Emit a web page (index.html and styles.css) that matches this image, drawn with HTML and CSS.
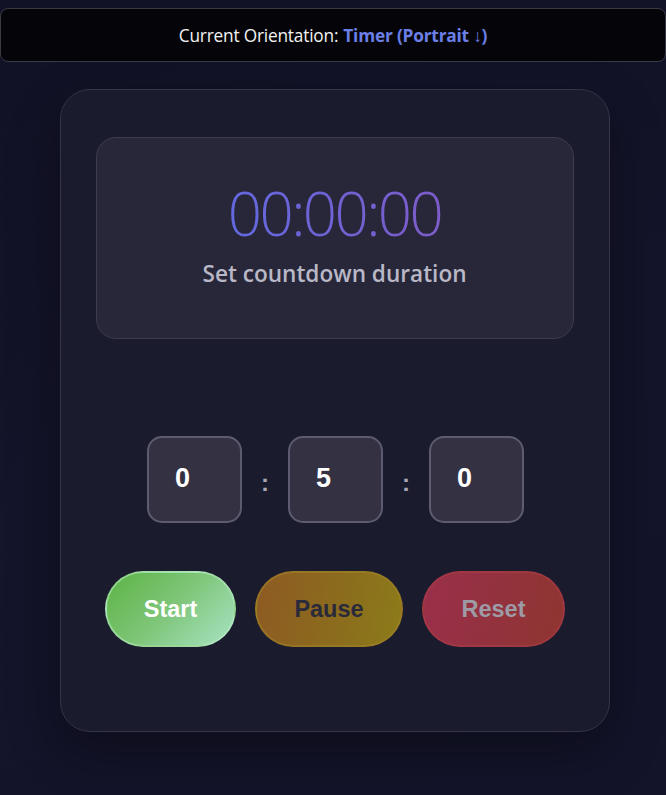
FILE: index.html
```html
<!DOCTYPE html>
<html>
<head>
<meta charset="utf-8">
<link rel="stylesheet" href="styles.css">
</head>
<body>
<div class="orientation">Current Orientation: <strong>Timer (Portrait ↓)</strong></div>
<main class="card">
  <section class="display">
    <div class="time">00:00:00</div>
    <div class="label">Set countdown duration</div>
  </section>
  <div class="inputs">
    <div class="field">0</div>
    <span class="sep">:</span>
    <div class="field">5</div>
    <span class="sep">:</span>
    <div class="field">0</div>
  </div>
  <div class="buttons">
    <button class="btn start">Start</button>
    <button class="btn pause">Pause</button>
    <button class="btn reset">Reset</button>
  </div>
</main>
</body>
</html>
```
FILE: styles.css
```css
html, body {
  margin: 0;
  padding: 0;
}
body {
  min-height: 795px;
  background: linear-gradient(160deg, #111225 0%, #14142a 50%, #13142a 100%);
  font-family: "Open Sans", "Noto Sans", sans-serif;
  padding-top: 8px;
  box-sizing: border-box;
}
.orientation {
  height: 54px;
  box-sizing: border-box;
  border: 1px solid #3a3a44;
  border-radius: 8px;
  background: #050509;
  color: #f2f2f2;
  font-size: 17.3px;
  display: flex;
  align-items: center;
  justify-content: center;
  letter-spacing: -0.2px;
}
.orientation strong {
  color: #6b7fe6;
  font-weight: 700;
  margin-left: 5px;
}
.card {
  width: 550px;
  height: 643px;
  box-sizing: border-box;
  margin: 27px 0 0 60px;
  border: 1px solid #34344a;
  border-radius: 30px;
  background: #1b1b2e;
  box-shadow: 0 20px 50px rgba(0, 0, 0, 0.35);
  padding: 47px 36px 0 35px;
  display: flex;
  flex-direction: column;
  align-items: center;
}
.display {
  width: 478px;
  height: 202px;
  box-sizing: border-box;
  border: 1px solid #3c3b50;
  border-radius: 20px;
  background: #28273a;
  display: flex;
  flex-direction: column;
  align-items: center;
  padding-top: 38px;
}
.time {
  font-weight: 300;
  font-size: 60px;
  line-height: 74px;
  letter-spacing: -2.6px;
  background: linear-gradient(90deg, #6369e0, #7d5cc9);
  -webkit-background-clip: text;
  background-clip: text;
  color: transparent;
}
.label {
  margin-top: 8px;
  font-size: 22.6px;
  font-weight: 600;
  color: #b9b8c6;
}
.inputs {
  margin-top: 97px;
  display: flex;
  align-items: center;
  margin-left: 2px;
}
.field {
  width: 95px;
  height: 87px;
  box-sizing: border-box;
  border: 2.5px solid #5d5b70;
  border-radius: 15px;
  background: #333142;
  color: #ffffff;
  font-family: "Liberation Sans", Arial, sans-serif;
  font-weight: 700;
  font-size: 27px;
  display: flex;
  align-items: center;
  padding-left: 26px;
  padding-bottom: 2px;
}
.sep {
  width: 46px;
  text-align: center;
  color: #a9a8b4;
  font-family: "Liberation Sans", Arial, sans-serif;
  font-weight: 700;
  font-size: 24px;
  padding-top: 6px;
}
.buttons {
  margin-top: 48px;
  display: flex;
  gap: 19px;
  margin-left: 1px;
}
.btn {
  height: 76px;
  border-radius: 38px;
  border: 2px solid rgba(255, 255, 255, 0.08);
  font-family: "Liberation Sans", Arial, sans-serif;
  font-weight: 700;
  font-size: 23.5px;
  padding: 0;
}
.start {
  width: 131px;
  color: #ffffff;
  background: linear-gradient(135deg, #5cb344 0%, #7fc67a 50%, #a8e3c3 100%);
  border-color: rgba(190, 240, 200, 0.5);
}
.pause {
  width: 148px;
  color: #2a2a3a;
  background: linear-gradient(100deg, #8e5a22 0%, #8b6a1e 50%, #8c7b19 100%);
  border-color: rgba(160, 130, 40, 0.6);
}
.reset {
  width: 143px;
  color: #9d9ba6;
  background: linear-gradient(100deg, #9a2f4b 0%, #93323e 50%, #8f3530 100%);
  border-color: rgba(170, 60, 70, 0.6);
}
```
